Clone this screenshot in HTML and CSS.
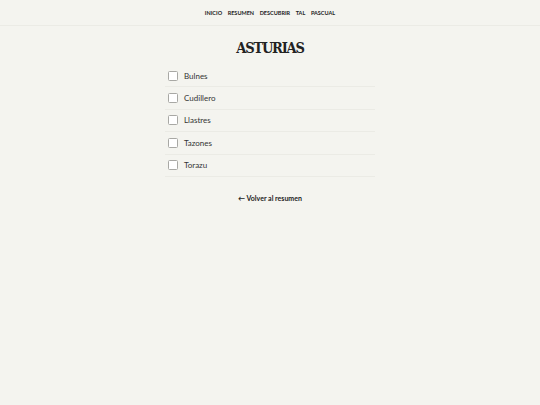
FILE: index.html
```html
<!DOCTYPE html>
<html lang="es">
<head>
<meta charset="utf-8">
<title>Asturias</title>
<link rel="stylesheet" href="styles.css">
</head>
<body>
<header class="site-header">
  <nav class="nav">
    <a href="#">INICIO</a>
    <a href="#">RESUMEN</a>
    <a href="#">DESCUBRIR</a>
    <a href="#">TAL</a>
    <a href="#">PASCUAL</a>
  </nav>
</header>
<main class="content">
  <h1 class="title">ASTURIAS</h1>
  <ul class="list">
    <li class="item"><span class="box"></span><span class="label">Bulnes</span></li>
    <li class="item"><span class="box"></span><span class="label">Cudillero</span></li>
    <li class="item"><span class="box"></span><span class="label">Llastres</span></li>
    <li class="item"><span class="box"></span><span class="label">Tazones</span></li>
    <li class="item"><span class="box"></span><span class="label">Torazu</span></li>
  </ul>
  <a class="back" href="#">← Volver al resumen</a>
</main>
</body>
</html>
```
FILE: styles.css
```css
* { box-sizing: border-box; }
html, body { margin: 0; padding: 0; }
body {
  background: #f4f4ef;
  font-family: Lato, "Open Sans", sans-serif;
  color: #2a2a2a;
  width: 540px;
  height: 405px;
}
.site-header {
  height: 26px;
  border-bottom: 1px solid #ebebe5;
  display: flex;
  align-items: center;
  justify-content: center;
}
.nav {
  display: flex;
  gap: 5.6px;
}
.nav a {
  font-size: 5.5px;
  font-weight: 700;
  color: #222;
  text-decoration: none;
}
.content {
  display: flex;
  flex-direction: column;
  align-items: center;
  padding-top: 12px;
}
.title {
  margin: 0;
  font-family: "DejaVu Serif", "Liberation Serif", serif;
  font-stretch: condensed;
  font-weight: 700;
  font-size: 14.5px;
  line-height: 20px;
  color: #222;
  letter-spacing: -1.2px;
}
.list {
  list-style: none;
  margin: 7px 0 0;
  padding: 0;
  width: 210px;
}
.item {
  height: 22.4px;
  display: flex;
  align-items: center;
  gap: 6px;
  padding-left: 3px;
  border-bottom: 1px solid #ebebe5;
}
.box {
  width: 10px;
  height: 10px;
  border: 1px solid #a8a8a4;
  border-radius: 1.5px;
  background: #fff;
  flex: none;
}
.label {
  font-size: 8px;
  color: #333;
}
.back {
  margin-top: 17px;
  font-size: 7px;
  font-weight: 700;
  color: #222;
  text-decoration: none;
}
```
